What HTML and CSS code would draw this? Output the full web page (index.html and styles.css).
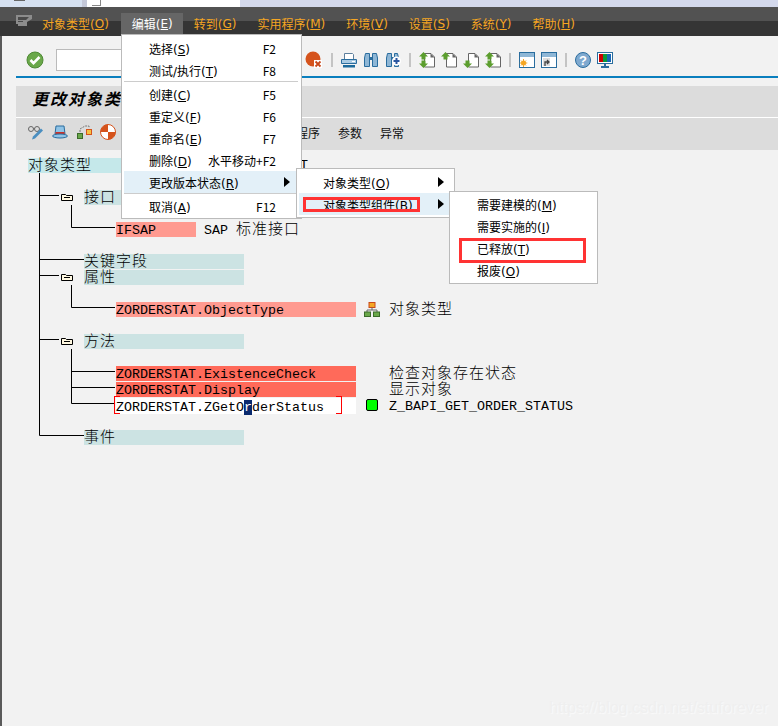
FILE: index.html
```html
<!DOCTYPE html>
<html lang="zh-CN">

<head>
    <meta charset="UTF-8" />
    <title>更改对象类型</title>
    <link rel="stylesheet" href="styles.css">
</head>

<body>
    <div class="tabs">
        <div class="tab-a"><i class="tab-mark"></i></div>
        <div class="tab-b"><i class="tab-doc"></i></div>
    </div>

    <div class="menubar">
        <svg class="menu-logo" width="16" height="12" viewBox="0 0 16 12">
            <path d="M0 0h16v4l-5 3v4H2V9H0z" fill="#8c8c8c" />
            <path d="M2 2h11l-3 3H2zM2 6h5v1H2z" fill="#4a4a4a" />
        </svg>
        <span class="mb">对象类型(<u>O</u>)</span>
        <span class="mb active">编辑(<u>E</u>)</span>
        <span class="mb">转到(<u>G</u>)</span>
        <span class="mb">实用程序(<u>M</u>)</span>
        <span class="mb">环境(<u>V</u>)</span>
        <span class="mb">设置(<u>S</u>)</span>
        <span class="mb">系统(<u>Y</u>)</span>
        <span class="mb">帮助(<u>H</u>)</span>
    </div>

    <div class="toolbar">
        <svg class="tb-check" width="18" height="18" viewBox="0 0 18 18">
            <circle cx="9" cy="9" r="8" fill="#6aa84a" stroke="#4e8a35" />
            <path d="M4.500 9l3 3.200L13.500 6" fill="none" stroke="#fff" stroke-width="2.600" />
        </svg>
        <div class="tb-input"></div>
        <svg class="tb-icon" width="18" height="18" viewBox="0 0 18 18">
            <circle cx="8" cy="8" r="7.500" fill="#d5531c" />
            <rect x="9" y="9" width="8" height="8" fill="#fff" />
            <path d="M10.500 10.500l5 5m0-5l-5 5" stroke="#c8481a" stroke-width="1.800" />
        </svg>
        <i class="tb-sep"></i>
        <svg class="tb-icon" width="16" height="16" viewBox="0 0 16 16">
            <path d="M3.500 1.500h8l1 1v5h-9z" fill="#fff" stroke="#5d7f9c" />
            <path d="M.5 7.500h15v4H.5z" fill="#a9cbe4" stroke="#2a6d9e" />
            <rect x="2" y="13" width="12" height="2.500" fill="#1c6a9c" />
            <rect x="11" y="9" width="3" height="1" fill="#fff" />
        </svg>
        <svg class="tb-icon" width="16" height="16" viewBox="0 0 16 16">
            <path d="M2.500 1.500h4v13h-5V6zM9.500 1.500h4l1 4.500v8.500h-5z" fill="#8fb7d6" stroke="#2a6d9e" />
            <rect x="6.500" y="5" width="3" height="3" fill="#2a6d9e" />
        </svg>
        <svg class="tb-icon" width="16" height="16" viewBox="0 0 16 16">
            <path d="M2.500 1.500h4v13h-5V6zM9.500 1.500h3l1 4.500v8.500h-4z" fill="#8fb7d6" stroke="#2a6d9e" />
            <rect x="6.500" y="5" width="3" height="3" fill="#2a6d9e" />
            <circle cx="11.500" cy="9" r="4.500" fill="#fff" />
            <path d="M11.500 6v6M8.500 9h6" stroke="#2a56a0" stroke-width="2" />
        </svg>
        <i class="tb-sep"></i>
        <svg class="tb-icon" width="16" height="16" viewBox="0 0 16 16">
            <use href="#page" />
            <use href="#arrow-up" />
            <use href="#arrow-down" />
        </svg>
        <svg class="tb-icon" width="16" height="16" viewBox="0 0 16 16">
            <use href="#page" />
            <use href="#arrow-up" />
        </svg>
        <svg class="tb-icon" width="16" height="16" viewBox="0 0 16 16">
            <use href="#page" />
            <use href="#arrow-down" />
        </svg>
        <svg class="tb-icon" width="16" height="16" viewBox="0 0 16 16">
            <use href="#page" />
            <use href="#arrow-up" />
            <use href="#arrow-down" />
        </svg>
        <i class="tb-sep"></i>
        <svg class="tb-icon" width="16" height="16" viewBox="0 0 16 16">
            <rect x=".5" y=".5" width="15" height="15" fill="#fff" stroke="#2a6d9e" />
            <rect x="1" y="1" width="14" height="4" fill="#8fb7d6" />
            <circle cx="4.500" cy="11" r="2.500" fill="#f5a623" />
            <path d="M4.500 7v8M.8 11h7.500M2 8.500l5 5m0-5l-5 5" stroke="#f5a623" />
        </svg>
        <svg class="tb-icon" width="16" height="16" viewBox="0 0 16 16">
            <rect x=".5" y=".5" width="15" height="15" fill="#fff" stroke="#2a6d9e" />
            <rect x="1" y="1" width="14" height="4" fill="#8fb7d6" />
            <rect x="2" y="6" width="7" height="8" fill="#ddd" />
            <path d="M4 14v-4h3M6 8l2 2-2 2" fill="none" stroke="#444" stroke-width="1.300" />
        </svg>
        <i class="tb-sep"></i>
        <svg class="tb-icon" width="16" height="16" viewBox="0 0 16 16">
            <circle cx="8" cy="8" r="7.500" fill="#7fa9cf" stroke="#2a6d9e" />
            <text x="8" y="12.500" class="help-mark">?</text>
        </svg>
        <svg class="tb-icon" width="16" height="16" viewBox="0 0 16 16">
            <rect x=".5" y=".5" width="15" height="11" fill="#fff" stroke="#2a6d9e" />
            <rect x="2" y="2" width="4" height="8" fill="#c00" />
            <rect x="6" y="2" width="4" height="8" fill="#0a9a3a" />
            <rect x="10" y="2" width="4" height="8" fill="#1766b5" />
            <path d="M7 12h2v2h3v2H4v-2h3z" fill="#2a6d9e" />
        </svg>
    </div>
    <div class="rule"></div>

    <div class="title">更改对象类型</div>
    <div class="apptools">
        <svg width="16" height="16" viewBox="0 0 16 16">
            <circle cx="3" cy="5" r="2.500" fill="none" stroke="#666" />
            <circle cx="9" cy="5" r="2.500" fill="none" stroke="#666" />
            <path d="M5.500 4.500h1" stroke="#666" />
            <path d="M15 6.500L7 14.500l-3 1 1-3 8-8z" fill="#4a8ec0" />
        </svg>
        <svg width="16" height="16" viewBox="0 0 16 16">
            <path d="M4 2h8l1 8H3z" fill="#8fc3e6" stroke="#2a6d9e" />
            <rect x="3.500" y="8" width="9" height="2" fill="#c8322a" />
            <ellipse cx="8" cy="12" rx="7.500" ry="2" fill="#8fc3e6" stroke="#2a6d9e" />
        </svg>
        <svg width="16" height="16" viewBox="0 0 16 16">
            <rect x="1.500" y="9.500" width="5" height="5" fill="#6aa84a" stroke="#3b6b2a" />
            <rect x="10.500" y="5.500" width="5" height="5" fill="#f5c242" stroke="#d5531c" />
            <path d="M4 8V5l5-3h4v2" fill="none" stroke="#777" stroke-dasharray="2 1" />
        </svg>
        <svg width="16" height="16" viewBox="0 0 16 16">
            <circle cx="8" cy="8" r="7.500" fill="#fff" stroke="#d5531c" />
            <path d="M8 8V.5A7.500 7.500 0 0 0 .5 8zM8 8v7.500A7.500 7.500 0 0 0 15.500 8z" fill="#d5531c" />
        </svg>
        <span class="apptext first">程序</span>
        <span class="apptext">参数</span>
        <span class="apptext">异常</span>
    </div>

    <div class="tree">
        <svg class="lines" width="130" height="290" viewBox="0 0 130 290">
            <path d="M39.500 15V277.500H84M39.500 37.500H59M39.500 101.500H84M39.500 117.500H59M39.500 181.500H59
                     M71.500 47V69.500H115M71.500 127V149.500H115M71.500 191V245.500H114
                     M71.500 213.500H115M71.500 229.500H115" fill="none" stroke="#000" />
        </svg>

        <div class="row">
            <span class="cell root cn">对象类型</span>
            <span class="desc root-desc">T</span>
        </div>
        <div class="row"></div>
        <div class="row">
            <svg class="folder" width="12" height="8" viewBox="0 0 12 8"><use href="#folder" /></svg>
            <span class="cell node cn">接口</span>
        </div>
        <div class="row"></div>
        <div class="row">
            <span class="cell item soft short">IFSAP</span>
            <span class="desc ifsap-desc">SAP <span class="cn">标准接口</span></span>
        </div>
        <div class="row"></div>
        <div class="row"><span class="cell node plain cn">关键字段</span></div>
        <div class="row">
            <svg class="folder" width="12" height="8" viewBox="0 0 12 8"><use href="#folder" /></svg>
            <span class="cell node cn">属性</span>
        </div>
        <div class="row"></div>
        <div class="row">
            <span class="cell item soft">ZORDERSTAT.ObjectType</span>
            <svg class="row-icon" width="16" height="15" viewBox="0 0 16 15">
                <rect x="5" y=".5" width="6" height="5" fill="#f5a623" stroke="#c8481a" />
                <path d="M8 5.500V8M3 10V8h10v2" fill="none" stroke="#666" />
                <rect x=".5" y="10" width="6" height="4.500" fill="#6aa84a" stroke="#3b6b2a" />
                <rect x="9.500" y="10" width="6" height="4.500" fill="#6aa84a" stroke="#3b6b2a" />
            </svg>
            <span class="desc cn">对象类型</span>
        </div>
        <div class="row"></div>
        <div class="row">
            <svg class="folder" width="12" height="8" viewBox="0 0 12 8"><use href="#folder" /></svg>
            <span class="cell node cn">方法</span>
        </div>
        <div class="row"></div>
        <div class="row">
            <span class="cell item hot">ZORDERSTAT.ExistenceCheck</span>
            <span class="row-icon"></span>
            <span class="desc cn">检查对象存在状态</span>
        </div>
        <div class="row">
            <span class="cell item hot">ZORDERSTAT.Display</span>
            <span class="row-icon"></span>
            <span class="desc cn">显示对象</span>
        </div>
        <div class="row">
            <span class="cell item edit">ZORDERSTAT.ZGetO<b class="sel">r</b>derStatus<i class="mark mark-l"></i><i class="mark mark-r"></i></span>
            <span class="row-icon status"></span>
            <span class="desc">Z_BAPI_GET_ORDER_STATUS</span>
        </div>
        <div class="row"></div>
        <div class="row"><span class="cell node plain cn">事件</span></div>
    </div>

    <div class="menu menu-edit">
        <div class="mi"><span>选择(<u>S</u>)</span><span class="key">F2</span></div>
        <div class="mi"><span>测试/执行(<u>T</u>)</span><span class="key">F8</span></div>
        <div class="msep"></div>
        <div class="mi"><span>创建(<u>C</u>)</span><span class="key">F5</span></div>
        <div class="mi"><span>重定义(<u>F</u>)</span><span class="key">F6</span></div>
        <div class="mi"><span>重命名(<u>E</u>)</span><span class="key">F7</span></div>
        <div class="mi"><span>删除(<u>D</u>)</span><span class="key">水平移动+F2</span></div>
        <div class="mi on"><span>更改版本状态(<u>R</u>)</span><span></span><i class="arrow"></i></div>
        <div class="msep"></div>
        <div class="mi"><span>取消(<u>A</u>)</span><span class="key">F12</span></div>
    </div>

    <div class="menu menu-status">
        <div class="mi"><span>对象类型(<u>O</u>)</span><span></span><i class="arrow"></i></div>
        <div class="mi on"><span>对象类型组件(<u>B</u>)</span><span></span><i class="arrow"></i></div>
    </div>

    <div class="menu menu-release">
        <div class="mi"><span>需要建模的(<u>M</u>)</span></div>
        <div class="mi"><span>需要实施的(<u>I</u>)</span></div>
        <div class="mi"><span>已释放(<u>T</u>)</span></div>
        <div class="mi"><span>报废(<u>O</u>)</span></div>
    </div>

    <div class="callout callout-b"></div>
    <div class="callout callout-t"></div>

    <div class="watermark">https://blog.csdn.net/stuforever</div>

    <svg width="0" height="0" class="defs">
        <defs>
            <g id="page">
                <path d="M5.500 1.500H12l3.500 3.500v10h-10z" fill="#fff" stroke="#666" />
                <path d="M11.500 1.500V5.500h4z" fill="#666" />
            </g>
            <g id="arrow-up">
                <path d="M4.500 0L9 4.500H6.500V7.500h-4V4.500H0z" fill="#5c9e2e" />
            </g>
            <g id="arrow-down">
                <path d="M4.500 16L9 11.500H6.500V8.500h-4v3H0z" fill="#5c9e2e" />
            </g>
            <g id="folder">
                <path d="M.5 1.500h4l1 1h6v5H.5z" fill="#fff8e0" stroke="#000" />
                <path d="M3 4.500h6" stroke="#000" />
            </g>
        </defs>
    </svg>
</body>

</html>
```

FILE: styles.css
```css
html,
body {
    margin: 0;
    padding: 0;
}

body {
    position: relative;
    width: 778px;
    height: 726px;
    overflow: hidden;
    background-color: #f2f2f2;
    color: #000;
    font-family: "DejaVu Sans", "Noto Sans CJK SC", sans-serif;
    font-size: 12px;
    box-shadow: inset 2px 0 0 #5a5a5a;
}

u {
    text-underline-offset: 1px;
}

.defs {
    position: absolute;
}

/* window tabs */
.tabs {
    display: flex;
    height: 7px;
    background-color: #d4d9ec;
}

.tab-a {
    width: 82px;
    background-color: #d6e1f1;
    border-right: 5px solid #c4c8d8;
}

.tab-mark {
    display: block;
    width: 11px;
    height: 1px;
    margin-left: 14px;
    background-color: #666;
}

.tab-b {
    width: 153px;
    background-color: #fff;
}

.tab-doc {
    display: block;
    width: 8px;
    height: 5px;
    margin-left: 5px;
    border-right: 1px solid #888;
    border-bottom: 1px solid #888;
}

/* menu bar */
.menubar {
    display: flex;
    align-items: flex-end;
    height: 29px;
    padding-left: 16px;
    background: linear-gradient(#525252 0, #525252 14px, #353535 14px, #353535 100%);
    box-sizing: border-box;
}

.menu-logo {
    align-self: flex-start;
    margin-top: 8px;
}

.mb {
    display: flex;
    align-items: center;
    justify-content: center;
    height: 23px;
    padding: 0 10px 2px;
    box-sizing: border-box;
    color: #f5a623;
    white-space: pre;
}

.mb+.mb {
    margin-left: 1px;
}

.mb.active {
    margin-left: 2px;
    padding-left: 11px;
    background-color: #666;
    color: #fff;
}

/* standard toolbar */
.toolbar {
    display: flex;
    align-items: center;
    height: 40px;
    padding-top: 8px;
    padding-left: 26px;
    box-sizing: border-box;
}

.tb-input {
    width: 240px;
    height: 20px;
    margin-left: 12px;
    margin-right: 7px;
    background-color: #fff;
    border: 1px solid #bbb;
}

.tb-check {
    flex: none;
}

.tb-icon {
    flex: none;
    margin-right: 6px;
}

.tb-sep {
    width: 2px;
    height: 14px;
    margin: 0 8px 0 2px;
    background-color: #c4c4c4;
}

.help-mark {
    font-family: "Liberation Sans", sans-serif;
    font-size: 13px;
    font-weight: bold;
    fill: #fff;
    text-anchor: middle;
}

.rule {
    height: 2px;
    margin-left: 16px;
    background-color: #0a7fbe;
}

/* screen title */
.title {
    display: flex;
    align-items: center;
    box-sizing: border-box;
    height: 31px;
    margin-top: 8px;
    margin-left: 16px;
    padding-left: 16px;
    padding-bottom: 8px;
    background-color: #dcdcdc;
    font-family: "Noto Sans CJK SC", sans-serif;
    font-size: 16px;
    font-style: italic;
    font-weight: bold;
    letter-spacing: 2px;
}

/* application toolbar */
.apptools {
    display: flex;
    align-items: center;
    gap: 8px;
    height: 33px;
    margin-left: 16px;
    padding-left: 12px;
    padding-bottom: 4px;
    background-color: #dcdcdc;
    border-top: 1px solid #fff;
    box-sizing: border-box;
    font-family: "Noto Sans CJK SC", sans-serif;
}

.apptext {
    margin-left: 10px;
    color: #111;
}

.apptext.first {
    margin-left: 172px;
}

/* object tree */
.tree {
    position: relative;
    margin-top: 8px;
    font-family: "Liberation Mono", monospace;
    font-size: 13.33px;
}

.lines {
    position: absolute;
    left: 0;
    top: 0;
}

.row {
    display: flex;
    align-items: flex-start;
    height: 16px;
    line-height: 15px;
    white-space: pre;
}

.cn {
    font-family: "Noto Sans CJK SC", sans-serif;
    font-size: 15px;
    font-weight: 300;
    line-height: 14px;
    letter-spacing: 1px;
}

.cell {
    display: flex;
    align-items: center;
    box-sizing: border-box;
    height: 15px;
}

.cell.cn {
    padding-bottom: 3px;
}

.root {
    width: 94px;
    margin-left: 28px;
    background-color: #c5e8ea;
}

.node {
    width: 160px;
    background-color: #cce3e3;
}

.node.plain {
    margin-left: 84px;
}

.folder {
    margin-top: 3px;
    margin-left: 61px;
    margin-right: 11px;
}

.item {
    position: relative;
    width: 240px;
    margin-left: 116px;
    padding-top: 2px;
}

.item.short {
    width: 80px;
}

.soft {
    background-color: #ff9a90;
}

.hot {
    background-color: #ff6a5a;
}

.edit {
    background-color: #fff;
    height: 16px;
}

.sel {
    background-color: #0a2a6e;
    color: #fff;
    font-weight: normal;
}

.mark {
    position: absolute;
    top: -2px;
    width: 5px;
    height: 16px;
    border-top: 1px solid #f00;
    border-bottom: 1px solid #f00;
}

.mark-l {
    left: -2px;
    border-left: 1px solid #f00;
}

.mark-r {
    left: 220px;
    border-right: 1px solid #f00;
}

.row-icon {
    flex: none;
    width: 16px;
    height: 15px;
    margin-left: 8px;
    margin-right: 9px;
}

.status {
    width: 10px;
    height: 10px;
    margin-top: 1px;
    margin-left: 10px;
    margin-right: 11px;
    background-color: #0f0;
    border: 1px solid #000;
    border-radius: 2px;
}

.desc {
    padding-top: 1px;
}

.desc.cn {
    padding-top: 0;
    margin-top: -1px;
}

.ifsap-desc {
    padding-top: 0;
    margin-top: -1px;
    margin-left: 8px;
}

.root-desc {
    padding-top: 0;
    margin-left: 178px;
}

/* dropdown menus */
.menu {
    position: absolute;
    box-sizing: border-box;
    background-color: #fff;
    border: 1px solid #bbb;
}

.menu-edit {
    left: 121px;
    top: 34px;
    width: 181px;
    height: 185px;
    padding: 2px 3px 0 2px;
}

.menu-status {
    left: 296px;
    top: 168px;
    width: 159px;
    height: 50px;
    padding: 2px 1px 0 2px;
}

.menu-release {
    left: 449px;
    top: 191px;
    width: 149px;
    height: 93px;
    padding: 1px 1px 0 2px;
}

.mi {
    display: grid;
    grid-template-columns: 1fr auto 22px;
    align-items: center;
    height: 22px;
    padding-left: 25px;
    white-space: pre;
}

.key {
    font-family: "Noto Sans CJK SC", sans-serif;
}

.mi.on {
    background-color: #e3f0f8;
}

.msep {
    height: 1px;
    margin-bottom: 1px;
    background-color: #ccc;
}

.arrow {
    width: 0;
    height: 0;
    margin-left: 8px;
    border-top: 5px solid transparent;
    border-bottom: 5px solid transparent;
    border-left: 6px solid #000;
}

.menu-status .arrow {
    margin-left: 0;
}

.menu-status .mi {
    grid-template-columns: 1fr auto 15px;
    padding-left: 24px;
}

/* red boxes drawn on the screenshot */
.callout {
    position: absolute;
    box-sizing: border-box;
    border: 3px solid #f33;
}

.callout-b {
    left: 303px;
    top: 197px;
    width: 117px;
    height: 15px;
}

.callout-t {
    left: 459px;
    top: 238px;
    width: 127px;
    height: 25px;
}

.watermark {
    position: absolute;
    right: 10px;
    bottom: 9px;
    color: #efefef;
    font-family: "Liberation Sans", sans-serif;
    font-size: 16px;
    text-shadow: 1px 1px 1px #fafafa;
}
```
